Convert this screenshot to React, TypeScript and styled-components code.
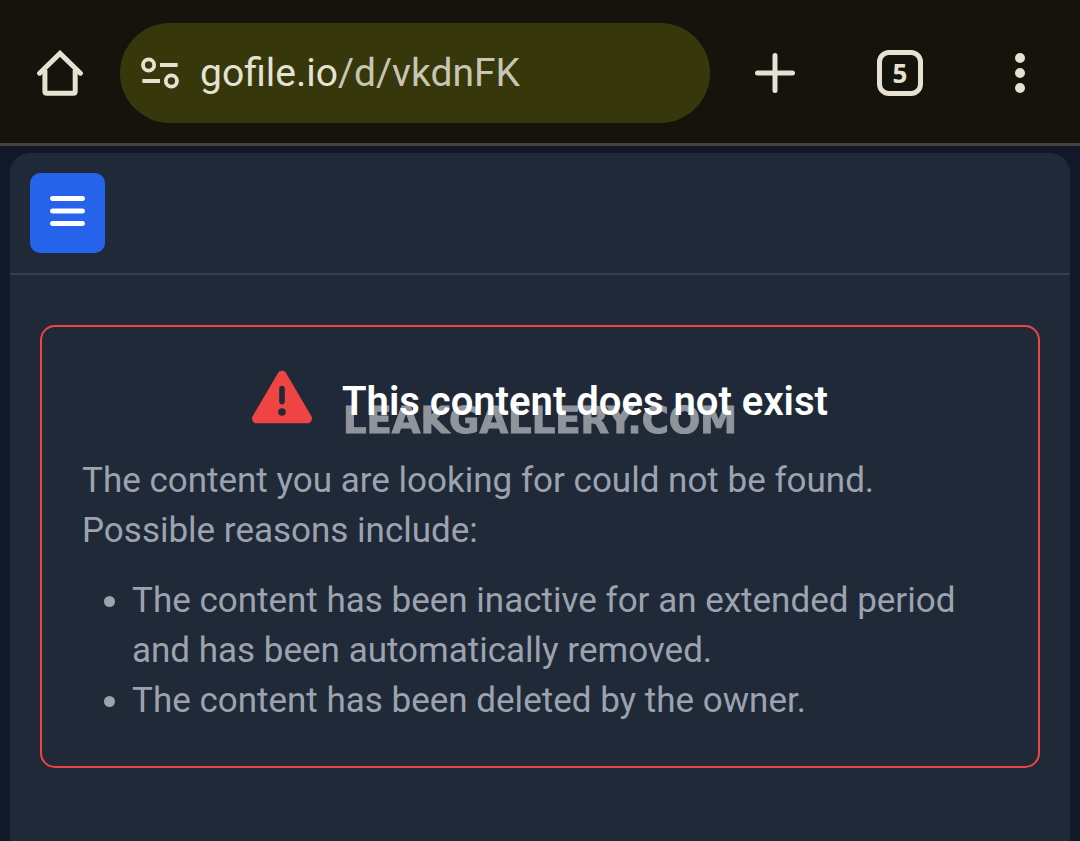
import React from "react";
import styled, { createGlobalStyle } from "styled-components";
import { FaBars, FaTriangleExclamation } from "react-icons/fa6";

const GlobalStyle = createGlobalStyle`
  *, *::before, *::after { box-sizing: border-box; }
  html, body, #root { min-height: 100%; }
  body {
    margin: 0;
    background: #111827;
    font-family: Roboto, "Liberation Sans", sans-serif;
    -webkit-font-smoothing: antialiased;
  }
`;

const Page = styled.div`
  display: flex;
  flex-direction: column;
  min-height: 100vh;
`;

const BrowserBar = styled.header`
  display: flex;
  align-items: center;
  padding: 23px 0 20px;
  background: #14130c;
  border-bottom: 3px solid #47443a;
  color: #e5e2d3;
`;

const BarButton = styled.button<{ $wide?: boolean }>`
  display: flex;
  flex: none;
  align-items: center;
  justify-content: center;
  width: ${(p) => (p.$wide ? 130 : 120)}px;
  height: 100px;
  padding: 0;
  border: 0;
  background: none;
  color: inherit;
  cursor: pointer;
`;

const AddressPill = styled.div`
  display: flex;
  flex: 1;
  align-items: center;
  gap: 20px;
  min-width: 0;
  height: 100px;
  padding: 0 20px;
  border-radius: 50px;
  background: #36380c;
`;

const PillButton = styled.button`
  display: flex;
  align-items: center;
  padding: 0;
  border: 0;
  background: none;
  color: inherit;
  font: 400 39px/52px Roboto, "Liberation Sans", sans-serif;
  white-space: nowrap;
  cursor: pointer;
`;

const UrlPath = styled.span`
  color: #c8c5b2;
`;

const TabCount = styled.span`
  display: flex;
  align-items: center;
  justify-content: center;
  width: 46px;
  height: 46px;
  border: 5px solid currentColor;
  border-radius: 12px;
  font: 700 26px/30px "Open Sans", sans-serif;
`;

const Panel = styled.main`
  flex: 1;
  margin: 7px 10px 0;
  border-radius: 20px 20px 0 0;
  background: #202938;
`;

const PanelHeader = styled.div`
  display: flex;
  padding: 20px;
  border-bottom: 2px solid #343f4e;
`;

const MenuButton = styled.button`
  display: flex;
  justify-content: center;
  width: 75px;
  height: 80px;
  padding: 18px 20px 22px;
  border: 0;
  border-radius: 10px;
  background: #2563eb;
  color: #fff;
  cursor: pointer;

  svg {
    width: 35px;
    height: 40px;
  }
`;

const Alert = styled.section`
  margin: 50px 30px;
  padding: 40px;
  border: 2px solid #ef4444;
  border-radius: 15px;
  color: #9ca3af;
  font-size: 35px;
  line-height: 50px;
`;

const AlertHeading = styled.div`
  display: flex;
  justify-content: center;
  gap: 30px;
  margin-bottom: 20px;
  color: #ef4444;
  font-size: 60px;

  svg { flex: none; }
`;

const Title = styled.h1`
  margin: 0;
  color: #fff;
  font-size: 40px;
  font-weight: 600;
  line-height: 69px;
`;

const Message = styled.p`
  margin: 0 0 20px;
`;

const Reasons = styled.ul`
  margin: 0;
  padding-left: 50px;
`;

const Watermark = styled.div`
  position: fixed;
  inset: 0;
  display: flex;
  align-items: center;
  justify-content: center;
  color: #fff;
  font: 700 37px/40px "DejaVu Sans", sans-serif;
  -webkit-text-stroke: 1px #fff;
  opacity: 0.5;
  pointer-events: none;
`;

const HomeIcon = () => (
  <svg width="46" height="46" viewBox="37 50 46 46" fill="none" stroke="currentColor" strokeWidth="5" aria-hidden="true">
    <path d="M44.9 70V91.2q0 2 2 2H73.2q2 0 2-2V70" />
    <path d="M39.6 73.2 60 53.4 80.4 73.2" strokeLinecap="round" strokeLinejoin="miter" />
  </svg>
);

const SiteIcon = () => (
  <svg width="40" height="34" viewBox="140 56 40 34" fill="none" stroke="currentColor" strokeWidth="3.8" aria-hidden="true">
    <circle cx="148.6" cy="65" r="5.6" />
    <path d="M160 65H177.6M142.4 81H160" />
    <circle cx="171.4" cy="81" r="5.6" />
  </svg>
);

const PlusIcon = () => (
  <svg width="40" height="40" viewBox="0 0 40 40" fill="none" stroke="currentColor" strokeWidth="5" strokeLinecap="round" aria-hidden="true">
    <path d="M20 2.5V37.5M2.5 20H37.5" />
  </svg>
);

const DotsIcon = () => (
  <svg width="10" height="40" viewBox="0 0 10 40" fill="currentColor" aria-hidden="true">
    <circle cx="5" cy="5" r="5" />
    <circle cx="5" cy="20" r="5" />
    <circle cx="5" cy="35" r="5" />
  </svg>
);

export default function App() {
  return (
    <>
      <GlobalStyle />
      <Page>
        <BrowserBar>
          <BarButton aria-label="Home"><HomeIcon /></BarButton>
          <AddressPill>
            <PillButton aria-label="Site information"><SiteIcon /></PillButton>
            <PillButton>gofile.io<UrlPath>/d/vkdnFK</UrlPath></PillButton>
          </AddressPill>
          <BarButton $wide aria-label="New tab"><PlusIcon /></BarButton>
          <BarButton title="Open tabs"><TabCount>5</TabCount></BarButton>
          <BarButton aria-label="More options"><DotsIcon /></BarButton>
        </BrowserBar>
        <Panel>
          <PanelHeader>
            <MenuButton aria-label="Toggle menu"><FaBars /></MenuButton>
          </PanelHeader>
          <Alert>
            <AlertHeading>
              <FaTriangleExclamation aria-hidden="true" />
              <Title>This content does not exist</Title>
            </AlertHeading>
            <Message>
              The content you are looking for could not be found. Possible reasons include:
            </Message>
            <Reasons>
              <li>The content has been inactive for an extended period and has been automatically removed.</li>
              <li>The content has been deleted by the owner.</li>
            </Reasons>
          </Alert>
        </Panel>
      </Page>
      <Watermark>LEAKGALLERY.COM</Watermark>
    </>
  );
}
